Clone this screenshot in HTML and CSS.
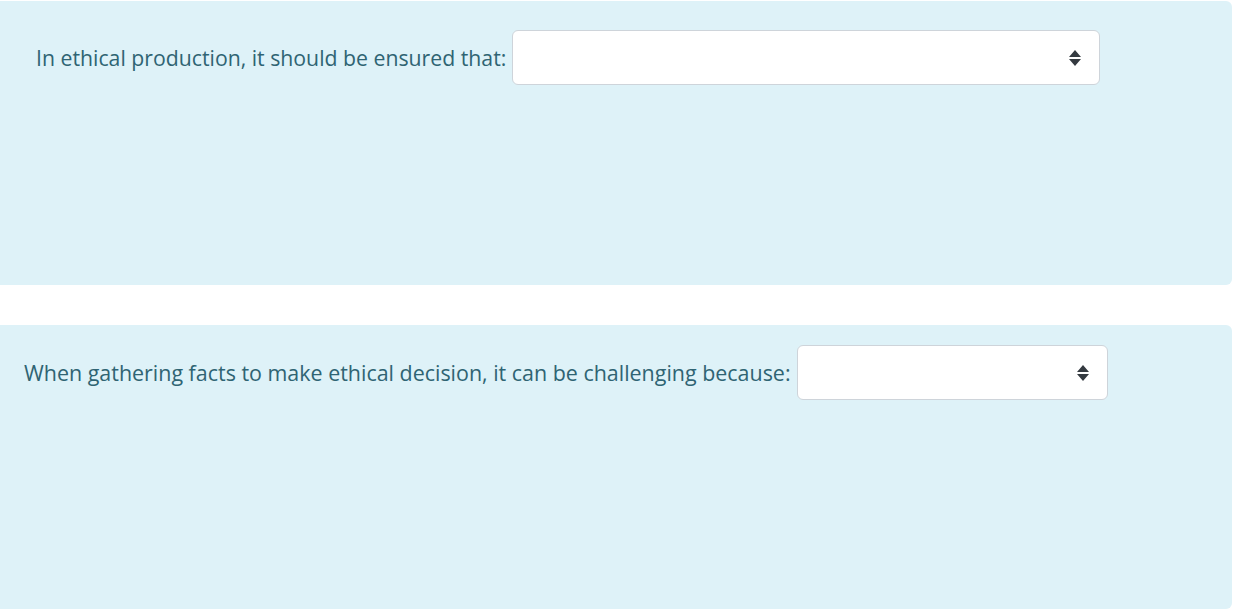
FILE: index.html
```html
<!DOCTYPE html>
<html lang="en">
<head>
<meta charset="utf-8">
<title>Questions</title>
<link rel="stylesheet" href="styles.css">
</head>
<body>
<main class="page">
  <section class="formulation formulation-first">
    <div class="qrow qrow-first">
      <label class="qtext" for="q1">In ethical production, it should be ensured that:</label>
      <div class="select select-wide" id="q1">
        <svg class="arrows" width="12" height="16" viewBox="0 0 12 16"><path d="M6 0 L12 7 H0 Z M0 9 H12 L6 16 Z" fill="#343a40"/></svg>
      </div>
    </div>
  </section>
  <section class="formulation formulation-second">
    <div class="qrow qrow-second">
      <label class="qtext" for="q2">When gathering facts to make ethical decision, it can be challenging because:</label>
      <div class="select select-narrow" id="q2">
        <svg class="arrows" width="12" height="16" viewBox="0 0 12 16"><path d="M6 0 L12 7 H0 Z M0 9 H12 L6 16 Z" fill="#343a40"/></svg>
      </div>
    </div>
  </section>
</main>
</body>
</html>
```

FILE: styles.css
```css
html, body {
  margin: 0;
  padding: 0;
  background: #ffffff;
}
body {
  font-family: "Open Sans", "Noto Sans", sans-serif;
  font-size: 21.3px;
  color: #2f6473;
}
.page {
  padding-top: 1px;
  display: flex;
  flex-direction: column;
  gap: 40px;
}
.formulation {
  width: 1232px;
  height: 284px;
  box-sizing: border-box;
  background: #def2f8;
  border-radius: 0 6px 6px 0;
}
.formulation-first { padding-top: 29px; }
.formulation-second { padding-top: 20px; }
.qrow {
  display: flex;
  align-items: center;
  gap: 6px;
}
.qrow-first { padding-left: 36px; font-size: 21.25px; }
.qrow-second { padding-left: 24px; font-size: 21.45px; }
.qtext {
  white-space: nowrap;
}
.select {
  height: 55px;
  box-sizing: border-box;
  background: #ffffff;
  border: 1px solid #ced4da;
  border-radius: 6px;
  display: flex;
  align-items: center;
  justify-content: flex-end;
  padding-right: 18px;
}
.select-wide { width: 588px; }
.select-narrow { width: 311px; }
.arrows { display: block; }
```
